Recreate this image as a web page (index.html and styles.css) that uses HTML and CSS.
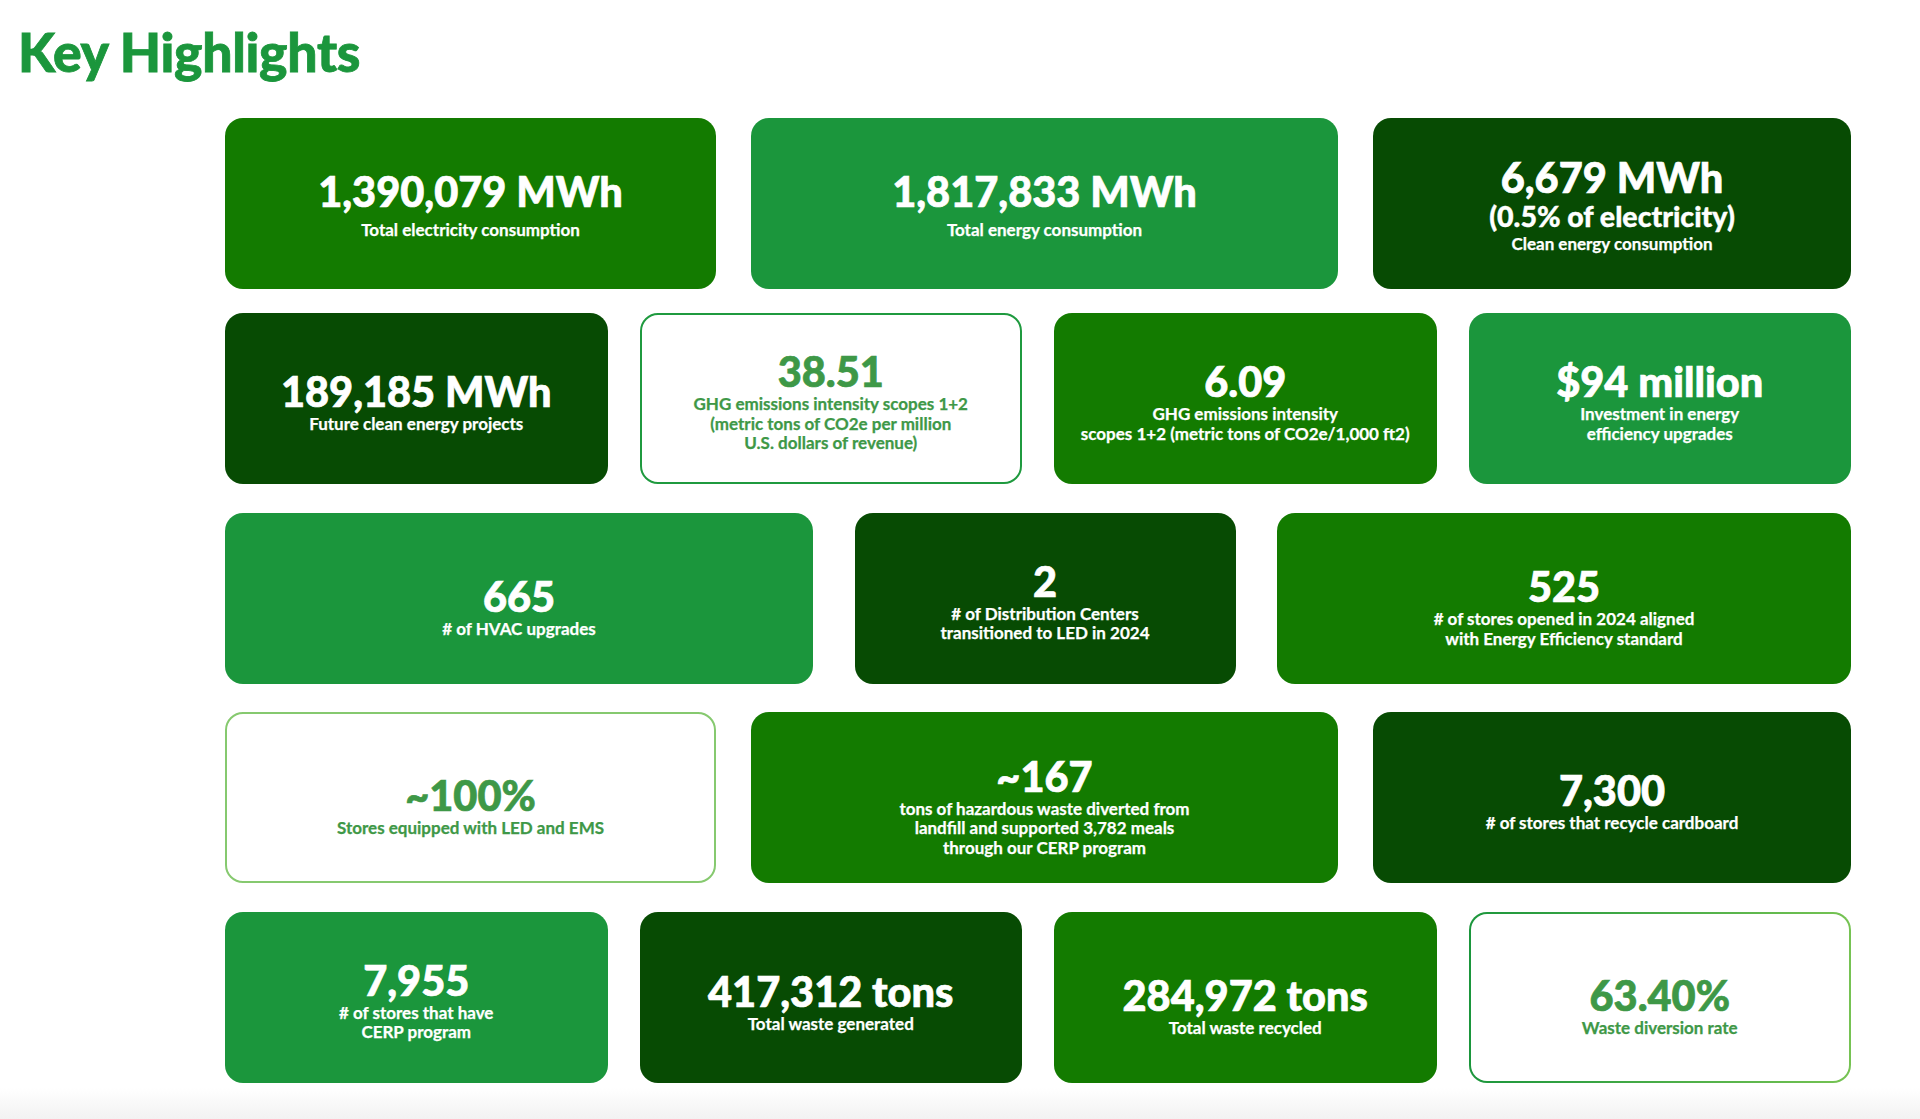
FILE: index.html
```html
<!DOCTYPE html>
<html lang="en">
<head>
<meta charset="utf-8">
<title>Key Highlights</title>
<link rel="stylesheet" href="styles.css">
</head>
<body>
<main class="page">
  <h1 class="title">Key Highlights</h1>
  <section class="grid">
    <div class="row row-a row-first">
      <div class="card bright spaced"><div class="num">1,390,079 MWh</div><div class="sub">Total electricity consumption</div></div>
      <div class="card medium spaced"><div class="num">1,817,833 MWh</div><div class="sub">Total energy consumption</div></div>
      <div class="card dark"><div class="num">6,679 MWh</div><div class="num-mid">(0.5% of electricity)</div><div class="sub">Clean energy consumption</div></div>
    </div>
    <div class="row row-b">
      <div class="card dark lo-1"><div class="num">189,185 MWh</div><div class="sub">Future clean energy projects</div></div>
      <div class="card outline lo-1"><div class="num">38.51</div><div class="sub">GHG emissions intensity scopes 1+2<br>(metric tons of CO2e per million<br>U.S. dollars of revenue)</div></div>
      <div class="card bright lo-1"><div class="num">6.09</div><div class="sub">GHG emissions intensity<br>scopes 1+2 (metric tons of CO2e/1,000 ft2)</div></div>
      <div class="card medium lo-1"><div class="num">$94 million</div><div class="sub">Investment in energy<br>efficiency upgrades</div></div>
    </div>
    <div class="row row-c">
      <div class="card medium lo-3"><div class="num">665</div><div class="sub"># of HVAC upgrades</div></div>
      <div class="card dark lo-1"><div class="num">2</div><div class="sub"># of Distribution Centers<br>transitioned to LED in 2024</div></div>
      <div class="card bright lo-3"><div class="num">525</div><div class="sub"># of stores opened in 2024 aligned<br>with Energy Efficiency standard</div></div>
    </div>
    <div class="row row-a">
      <div class="card outline light lo-3"><div class="num">~100%</div><div class="sub">Stores equipped with LED and EMS</div></div>
      <div class="card bright lo-3"><div class="num">~167</div><div class="sub">tons of hazardous waste diverted from<br>landfill and supported 3,782 meals<br>through our CERP program</div></div>
      <div class="card dark lo-1"><div class="num">7,300</div><div class="sub"># of stores that recycle cardboard</div></div>
    </div>
    <div class="row row-b">
      <div class="card medium lo-1"><div class="num">7,955</div><div class="sub"># of stores that have<br>CERP program</div></div>
      <div class="card dark lo-2"><div class="num">417,312 tons</div><div class="sub">Total waste generated</div></div>
      <div class="card bright lo-3"><div class="num">284,972 tons</div><div class="sub">Total waste recycled</div></div>
      <div class="card outline fade lo-3"><div class="num">63.40%</div><div class="sub">Waste diversion rate</div></div>
    </div>
  </section>
</main>
</body>
</html>
```
FILE: styles.css
```css
html {
  background: linear-gradient(to bottom, #ffffff 0, #ffffff 1088px, #f2f2f2 1119px);
  min-height: 100%;
}
body {
  margin: 0;
  font-family: "Lato", "Liberation Sans", sans-serif;
}
.page {
  width: 1920px;
  height: 1119px;
  overflow: hidden;
}
.title {
  margin: 20px 0 0 18px;
  font-size: 53.5px;
  line-height: 62px;
  font-weight: 900;
  color: #1b963c;
  letter-spacing: -0.3px;
  -webkit-text-stroke: 0.8px currentColor;
}
.grid {
  margin: 36px 0 0 225px;
  width: 1626px;
  display: flex;
  flex-direction: column;
  gap: 28.5px;
}
.row {
  display: grid;
}
.row-first {
  margin-bottom: -4.5px;
}
.row-a {
  grid-template-columns: 491fr 587fr 478fr;
  column-gap: 35px;
}
.row-b {
  grid-template-columns: repeat(4, 1fr);
  column-gap: 32px;
}
.row-c {
  grid-template-columns: 588fr 381fr 574fr;
  column-gap: 41.5px;
}
.card {
  box-sizing: border-box;
  height: 171px;
  border-radius: 18px;
  display: flex;
  flex-direction: column;
  align-items: center;
  justify-content: center;
  text-align: center;
  color: #ffffff;
}
.lo-1 { padding-top: 4px; }
.lo-2 { padding-top: 8px; }
.lo-3 { padding-top: 15px; }
.bright { background: #137b00; }
.medium { background: #1b963c; }
.dark { background: #074b03; }
.outline {
  background: #ffffff;
  border: 2px solid #1f9a3f;
  color: #3e9847;
}
.outline.light {
  border-color: #86c96f;
}
.outline.fade {
  border: 2px solid transparent;
  background: linear-gradient(#ffffff, #ffffff) padding-box,
              linear-gradient(90deg, #1b963c, #76c353) border-box;
}
.num {
  font-size: 41.5px;
  line-height: 46px;
  font-weight: 900;
  -webkit-text-stroke: 0.7px currentColor;
}
.num-mid {
  margin-bottom: 2px;
  font-size: 28.5px;
  line-height: 32px;
  font-weight: 900;
  -webkit-text-stroke: 0.4px currentColor;
}
.sub {
  margin-top: 0;
  font-size: 17px;
  line-height: 19.5px;
  font-weight: 700;
  -webkit-text-stroke: 0.25px currentColor;
}
.spaced .sub {
  margin-top: 6px;
}
```
